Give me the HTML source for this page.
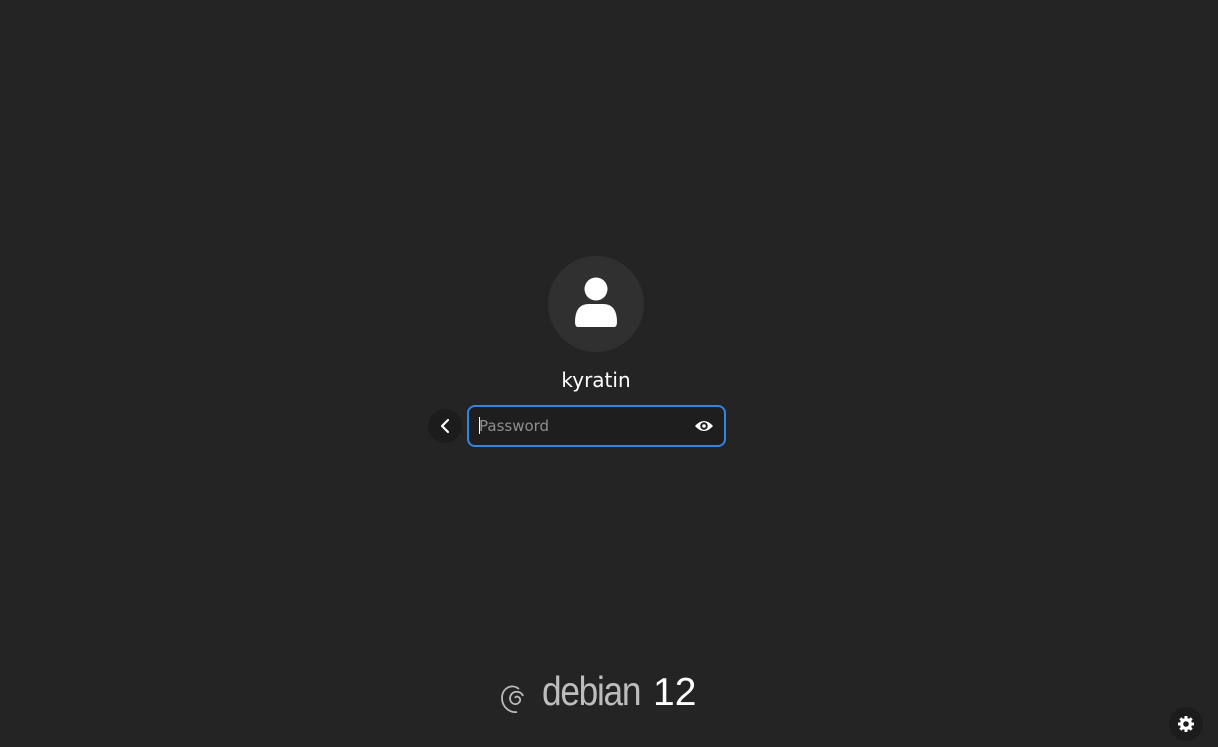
<!DOCTYPE html>
<html><head><meta charset="utf-8"><style>
html,body{margin:0;padding:0;width:1218px;height:747px;background:#242424;overflow:hidden;font-family:"DejaVu Sans","Liberation Sans",sans-serif}
.abs{position:absolute}
</style></head><body>
<div class="abs" style="left:548px;top:256px;width:96px;height:96px;border-radius:50%;background:#303030"></div>
<svg class="abs" style="left:548px;top:256px" width="96" height="96" viewBox="0 0 96 96">
<circle cx="48" cy="33" r="11.5" fill="#fff"/>
<path d="M27 66 Q27 48 41 48 L55 48 Q69 48 69 66 Q69 71 66 71 L30 71 Q27 71 27 66Z" fill="#fff"/>
</svg>
<div class="abs" style="left:496px;top:368px;width:200px;text-align:center;color:#fff;font-size:20px">kyratin</div>
<div class="abs" style="left:428px;top:409px;width:34px;height:34px;border-radius:50%;background:#1c1c1c"></div>
<svg class="abs" style="left:428px;top:409px" width="34" height="34" viewBox="0 0 34 34"><path d="M20 11 L14 17 L20 23" stroke="#fff" stroke-width="2.2" fill="none" stroke-linecap="round" stroke-linejoin="round"/></svg>
<div class="abs" style="left:467px;top:405px;width:255px;height:38px;border:2px solid #3584e4;border-radius:8px;background:#1e1e1e"></div>
<div class="abs" style="left:479px;top:417px;width:1px;height:17px;background:#fff"></div>
<div class="abs" style="left:479px;top:417px;color:#8f8f8f;font-size:15px">Password</div>
<svg class="abs" style="left:693px;top:416px" width="22" height="20" viewBox="0 0 22 20"><path d="M2 10 Q11 0 20 10 Q11 20 2 10Z" fill="#fff"/><circle cx="11" cy="10" r="3.8" fill="#1e1e1e"/><circle cx="11" cy="10" r="1.8" fill="#fff"/></svg>
<svg class="abs" style="left:499px;top:678px" width="30" height="38" viewBox="0 0 30 38"><path d="M20 11 C13 5 3 10 3 20 C3 30 12 35 18 34 M24 18 C22 12 12 12 11 20 C11 27 19 28 21 23 C22 19 17 17 16 20" stroke="#bbb" stroke-width="1.8" fill="none"/></svg>
<div class="abs" style="left:542px;top:668px;color:#bdbdbd;font-size:41px;font-family:'Liberation Sans Narrow','Liberation Sans',sans-serif;letter-spacing:-1.5px;transform:scaleX(0.86);transform-origin:left">debian</div>
<div class="abs" style="left:653px;top:671px;color:#fff;font-size:39px;font-family:'Liberation Sans',sans-serif">12</div>
<div class="abs" style="left:1169px;top:707px;width:34px;height:34px;border-radius:50%;background:#1c1c1c"></div>
<svg class="abs" style="left:1177px;top:715px" width="18" height="18" viewBox="0 0 18 18"><g fill="#fff"><circle cx="9" cy="9" r="6"/><rect x="7.5" y="1" width="3" height="16"/><rect x="1" y="7.5" width="16" height="3"/><rect x="7.5" y="1" width="3" height="16" transform="rotate(45 9 9)"/><rect x="7.5" y="1" width="3" height="16" transform="rotate(-45 9 9)"/></g><circle cx="9" cy="9" r="2.8" fill="#1c1c1c"/></svg>
</body></html>
